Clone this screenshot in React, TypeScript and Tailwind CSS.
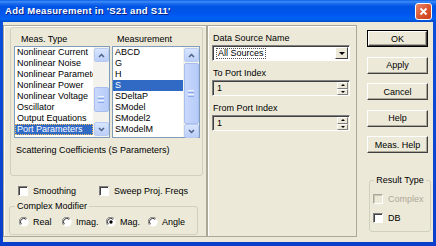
import React from "react";

function Chevron({ down }: { down?: boolean }) {
  return (
    <svg width="7" height="5" viewBox="0 0 7 5">
      <path
        d={down ? "M1 1 L3.5 3.5 L6 1" : "M1 4 L3.5 1.5 L6 4"}
        stroke="#4D6185"
        strokeWidth="1.5"
        fill="none"
      />
    </svg>
  );
}

function ScrollBtn({ down }: { down?: boolean }) {
  return (
    <div className="h-[14px] w-[15px] rounded-[2px] border border-[#B9CBF3] bg-[linear-gradient(180deg,#D8E5FE,#BBCEF8)] flex items-center justify-center shrink-0">
      <Chevron down={down} />
    </div>
  );
}

function ScrollBar({ spacer, thumb }: { spacer: string; thumb: string }) {
  return (
    <div className="w-[16px] h-full bg-[#F3F2EC] flex flex-col items-center pt-[1px] pb-[1px]">
      <ScrollBtn />
      <div className={spacer} />
      <div
        className={`${thumb} w-[15px] rounded-[2px] border border-[#A9BFF0] bg-[linear-gradient(90deg,#C9D8FC,#B6CBF8)] flex flex-col items-center justify-center gap-[1px] shrink-0`}
      >
        <div className="w-[6px] h-[1px] bg-[#EEF3FE]" />
        <div className="w-[6px] h-[1px] bg-[#8DAAE8]" />
        <div className="w-[6px] h-[1px] bg-[#EEF3FE]" />
        <div className="w-[6px] h-[1px] bg-[#8DAAE8]" />
      </div>
      <div className="flex-1" />
      <ScrollBtn down />
    </div>
  );
}

function ListBox({
  items,
  selected,
  width,
  spacer,
  thumb,
  dotted,
}: {
  items: string[];
  selected: number;
  width: string;
  spacer: string;
  thumb: string;
  dotted?: boolean;
}) {
  return (
    <div className={`${width} h-[92px] border border-[#7F9DB9] bg-white flex`}>
      <div className="flex-1 min-w-0 flex flex-col">
        {items.map((it, i) => (
          <div
            key={it}
            className={`h-[11px] leading-[11px] pl-[2px] whitespace-nowrap overflow-hidden ${
              i === selected ? "bg-[#316AC5] text-white" : ""
            } ${i === selected && dotted ? "outline-1 outline-dotted outline-[#F0C060] -outline-offset-1" : ""}`}
          >
            {it}
          </div>
        ))}
      </div>
      <ScrollBar spacer={spacer} thumb={thumb} />
    </div>
  );
}

function CheckBox({ label, disabled }: { label: string; disabled?: boolean }) {
  return (
    <div className="flex items-center">
      <div
        className={`w-[10px] h-[10px] border-t border-l border-b border-r ${
          disabled
            ? "border-t-[#ACA899] border-l-[#ACA899] border-b-white border-r-white bg-[#ECE9D8] shadow-[inset_1px_1px_0_#C9C7BA]"
            : "border-t-[#808080] border-l-[#808080] border-b-white border-r-white bg-white shadow-[inset_1px_1px_0_#404040]"
        }`}
      />
      <span className={`ml-[5px] ${disabled ? "text-[#ACA899]" : ""}`}>{label}</span>
    </div>
  );
}

function Radio({ label, checked }: { label: string; checked?: boolean }) {
  return (
    <div className="flex items-center">
      <svg width="10" height="10" viewBox="0 0 12 12">
        <circle cx="6" cy="6" r="5.5" fill="white" />
        <path d="M1.8 9.5 A5 5 0 0 1 9.5 1.8" stroke="#808080" strokeWidth="1.2" fill="none" />
        <path d="M2.9 8.6 A3.8 3.8 0 0 1 8.6 2.9" stroke="#303030" strokeWidth="1.2" fill="none" />
        {checked && <circle cx="6" cy="6" r="2" fill="black" />}
      </svg>
      <span className="ml-[4px]">{label}</span>
    </div>
  );
}

function Button({ label, def }: { label: string; def?: boolean }) {
  return (
    <div className={`w-[61px] h-[17px] ${def ? "border border-black" : ""} shrink-0`}>
      <div className="w-full h-full border-t border-l border-t-white border-l-white border-b border-r border-b-[#404040] border-r-[#404040] shadow-[inset_-1px_-1px_0_#ACA899] bg-[#ECE9D8] flex items-center justify-center">
        {label}
      </div>
    </div>
  );
}

function SpinField() {
  return (
    <div className="ml-[4px] w-[138px] h-[16px] border-t border-l border-t-[#808080] border-l-[#808080] border-b border-r border-b-white border-r-white shadow-[inset_1px_1px_0_#404040] bg-[#ECE9D8] flex items-center">
      <span className="ml-[4px] flex-1">1</span>
      <div className="w-[11px] h-[13px] mr-[1px] flex flex-col">
        <div className="h-[7px] border-t border-l border-t-white border-l-white border-b border-r border-b-[#808080] border-r-[#808080] bg-[#ECE9D8] flex items-center justify-center">
          <div className="w-0 h-0 border-l-[2px] border-r-[2px] border-b-[2px] border-l-transparent border-r-transparent border-b-black" />
        </div>
        <div className="h-[6px] border-t border-l border-t-white border-l-white border-b border-r border-b-[#808080] border-r-[#808080] bg-[#ECE9D8] flex items-center justify-center">
          <div className="w-0 h-0 border-l-[2px] border-r-[2px] border-t-[2px] border-l-transparent border-r-transparent border-t-black" />
        </div>
      </div>
    </div>
  );
}

export default function App() {
  return (
    <div className="w-[436px] h-[246px] bg-[linear-gradient(180deg,#0A50DC,#0A3FCC)] flex flex-col overflow-hidden font-['Liberation_Sans',Arial,sans-serif] text-[9px] leading-[10px] text-black">
      {/* Title bar */}
      <div className="h-[22px] shrink-0 flex items-center bg-[linear-gradient(180deg,#0a5fe8_0%,#3d8cf7_8%,#1c6cf0_16%,#0054e3_30%,#0055eb_60%,#005bf5_72%,#0062ef_88%,#0048c8_100%)]">
        <span className="ml-[5px] text-white font-bold text-[9.5px] tracking-[0.3px] [text-shadow:1px_1px_0_#0A1F80] flex-1 whitespace-nowrap">
          Add Measurement in 'S21 and S11'
        </span>
        <div className="mr-[4px] w-[17px] h-[17px] rounded-[3px] border border-white bg-[linear-gradient(135deg,#E9866A,#D9542F_55%,#C8401E)] flex items-center justify-center">
          <svg width="9" height="9" viewBox="0 0 9 9">
            <path d="M1.5 1.5 L7.5 7.5 M7.5 1.5 L1.5 7.5" stroke="white" strokeWidth="1.8" />
          </svg>
        </div>
      </div>

      {/* Body */}
      <div className="flex-1 mx-[3px] mb-[4px] bg-[#ECE9D8] flex pt-[3px]">
        {/* Left panel */}
        <div className="w-[204px] h-[212px] border border-[#ACA899] shadow-[inset_1px_1px_0_#fff] flex flex-col">
          <div className="ml-[6px] mt-[1px] w-[193px] h-[149px] border border-[#D0D0BF] rounded-[3px] flex flex-col shrink-0">
            <div className="flex mt-[6px] h-[10px]">
              <span className="ml-[10px] w-[96px]">Meas. Type</span>
              <span>Measurement</span>
            </div>
            <div className="flex mt-[2px] ml-[3px] gap-[2px]">
              <ListBox
                width="w-[96px]"
                items={[
                  "Nonlinear Current",
                  "Nonlinear Noise",
                  "Nonlinear Parameters",
                  "Nonlinear Power",
                  "Nonlinear Voltage",
                  "Oscillator",
                  "Output Equations",
                  "Port Parameters",
                ]}
                selected={7}
                spacer="h-[25px] shrink-0"
                thumb="h-[25px]"
                dotted
              />
              <ListBox
                width="w-[88px]"
                items={["ABCD", "G", "H", "S", "SDeltaP", "SModel", "SModel2", "SModelM"]}
                selected={3}
                spacer="h-[1px] shrink-0"
                thumb="h-[61px]"
              />
            </div>
            <div className="mt-[7px] ml-[5px]">Scattering Coefficients (S Parameters)</div>
          </div>

          <div className="flex mt-[10px] h-[10px] items-center">
            <div className="ml-[14px] w-[81px]">
              <CheckBox label="Smoothing" />
            </div>
            <CheckBox label="Sweep Proj. Freqs" />
          </div>

          <fieldset className="ml-[5px] mt-[5px] w-[189px] h-[34px] border border-[#D0D0BF] rounded-[3px] px-0 pb-0">
            <legend className="ml-[5px] px-[2px]">Complex Modifier</legend>
            <div className="flex items-center mt-[6px]">
              <div className="ml-[9px] w-[43px]">
                <Radio label="Real" />
              </div>
              <div className="w-[44px]">
                <Radio label="Imag." />
              </div>
              <div className="w-[42px]">
                <Radio label="Mag." checked />
              </div>
              <Radio label="Angle" />
            </div>
          </fieldset>
        </div>

        {/* Middle panel */}
        <div className="w-[150px] h-[212px] border border-[#ACA899] shadow-[inset_1px_1px_0_#fff] flex flex-col">
          <div className="ml-[5px] mt-[7px] h-[10px]">Data Source Name</div>
          <div className="ml-[4px] mt-[2px] w-[138px] h-[16px] border-t border-l border-t-[#808080] border-l-[#808080] border-b border-r border-b-white border-r-white shadow-[inset_1px_1px_0_#404040] bg-white flex items-center">
            <span className="ml-[3px] px-[1px] border border-dotted border-[#555] leading-[9px]">All Sources</span>
            <div className="flex-1" />
            <div className="w-[13px] h-[12px] mr-[1px] border-t border-l border-t-white border-l-white border-b border-r border-b-[#404040] border-r-[#404040] bg-[#ECE9D8] flex items-center justify-center">
              <div className="w-0 h-0 border-l-[3px] border-r-[3px] border-t-[3px] border-l-transparent border-r-transparent border-t-black" />
            </div>
          </div>
          <div className="ml-[5px] mt-[7px] h-[10px]">To Port Index</div>
          <div className="mt-[2px]">
            <SpinField />
          </div>
          <div className="ml-[5px] mt-[7px] h-[10px]">From Port Index</div>
          <div className="mt-[2px]">
            <SpinField />
          </div>
        </div>

        {/* Right panel */}
        <div className="flex-1 flex flex-col pl-[10px] pt-[5px]">
          <div className="flex flex-col gap-[9.5px]">
            <Button label="OK" def />
            <Button label="Apply" />
            <Button label="Cancel" />
            <Button label="Help" />
            <Button label="Meas. Help" />
          </div>
          <fieldset className="ml-[2px] mt-[22px] w-[62px] h-[57px] border border-[#D0D0BF] rounded-[3px] px-0 pb-0">
            <legend className="mx-auto px-[2px]">Result Type</legend>
            <div className="ml-[3px] mt-[9px] flex flex-col gap-[9px]">
              <CheckBox label="Complex" disabled />
              <CheckBox label="DB" />
            </div>
          </fieldset>
        </div>
      </div>
    </div>
  );
}
